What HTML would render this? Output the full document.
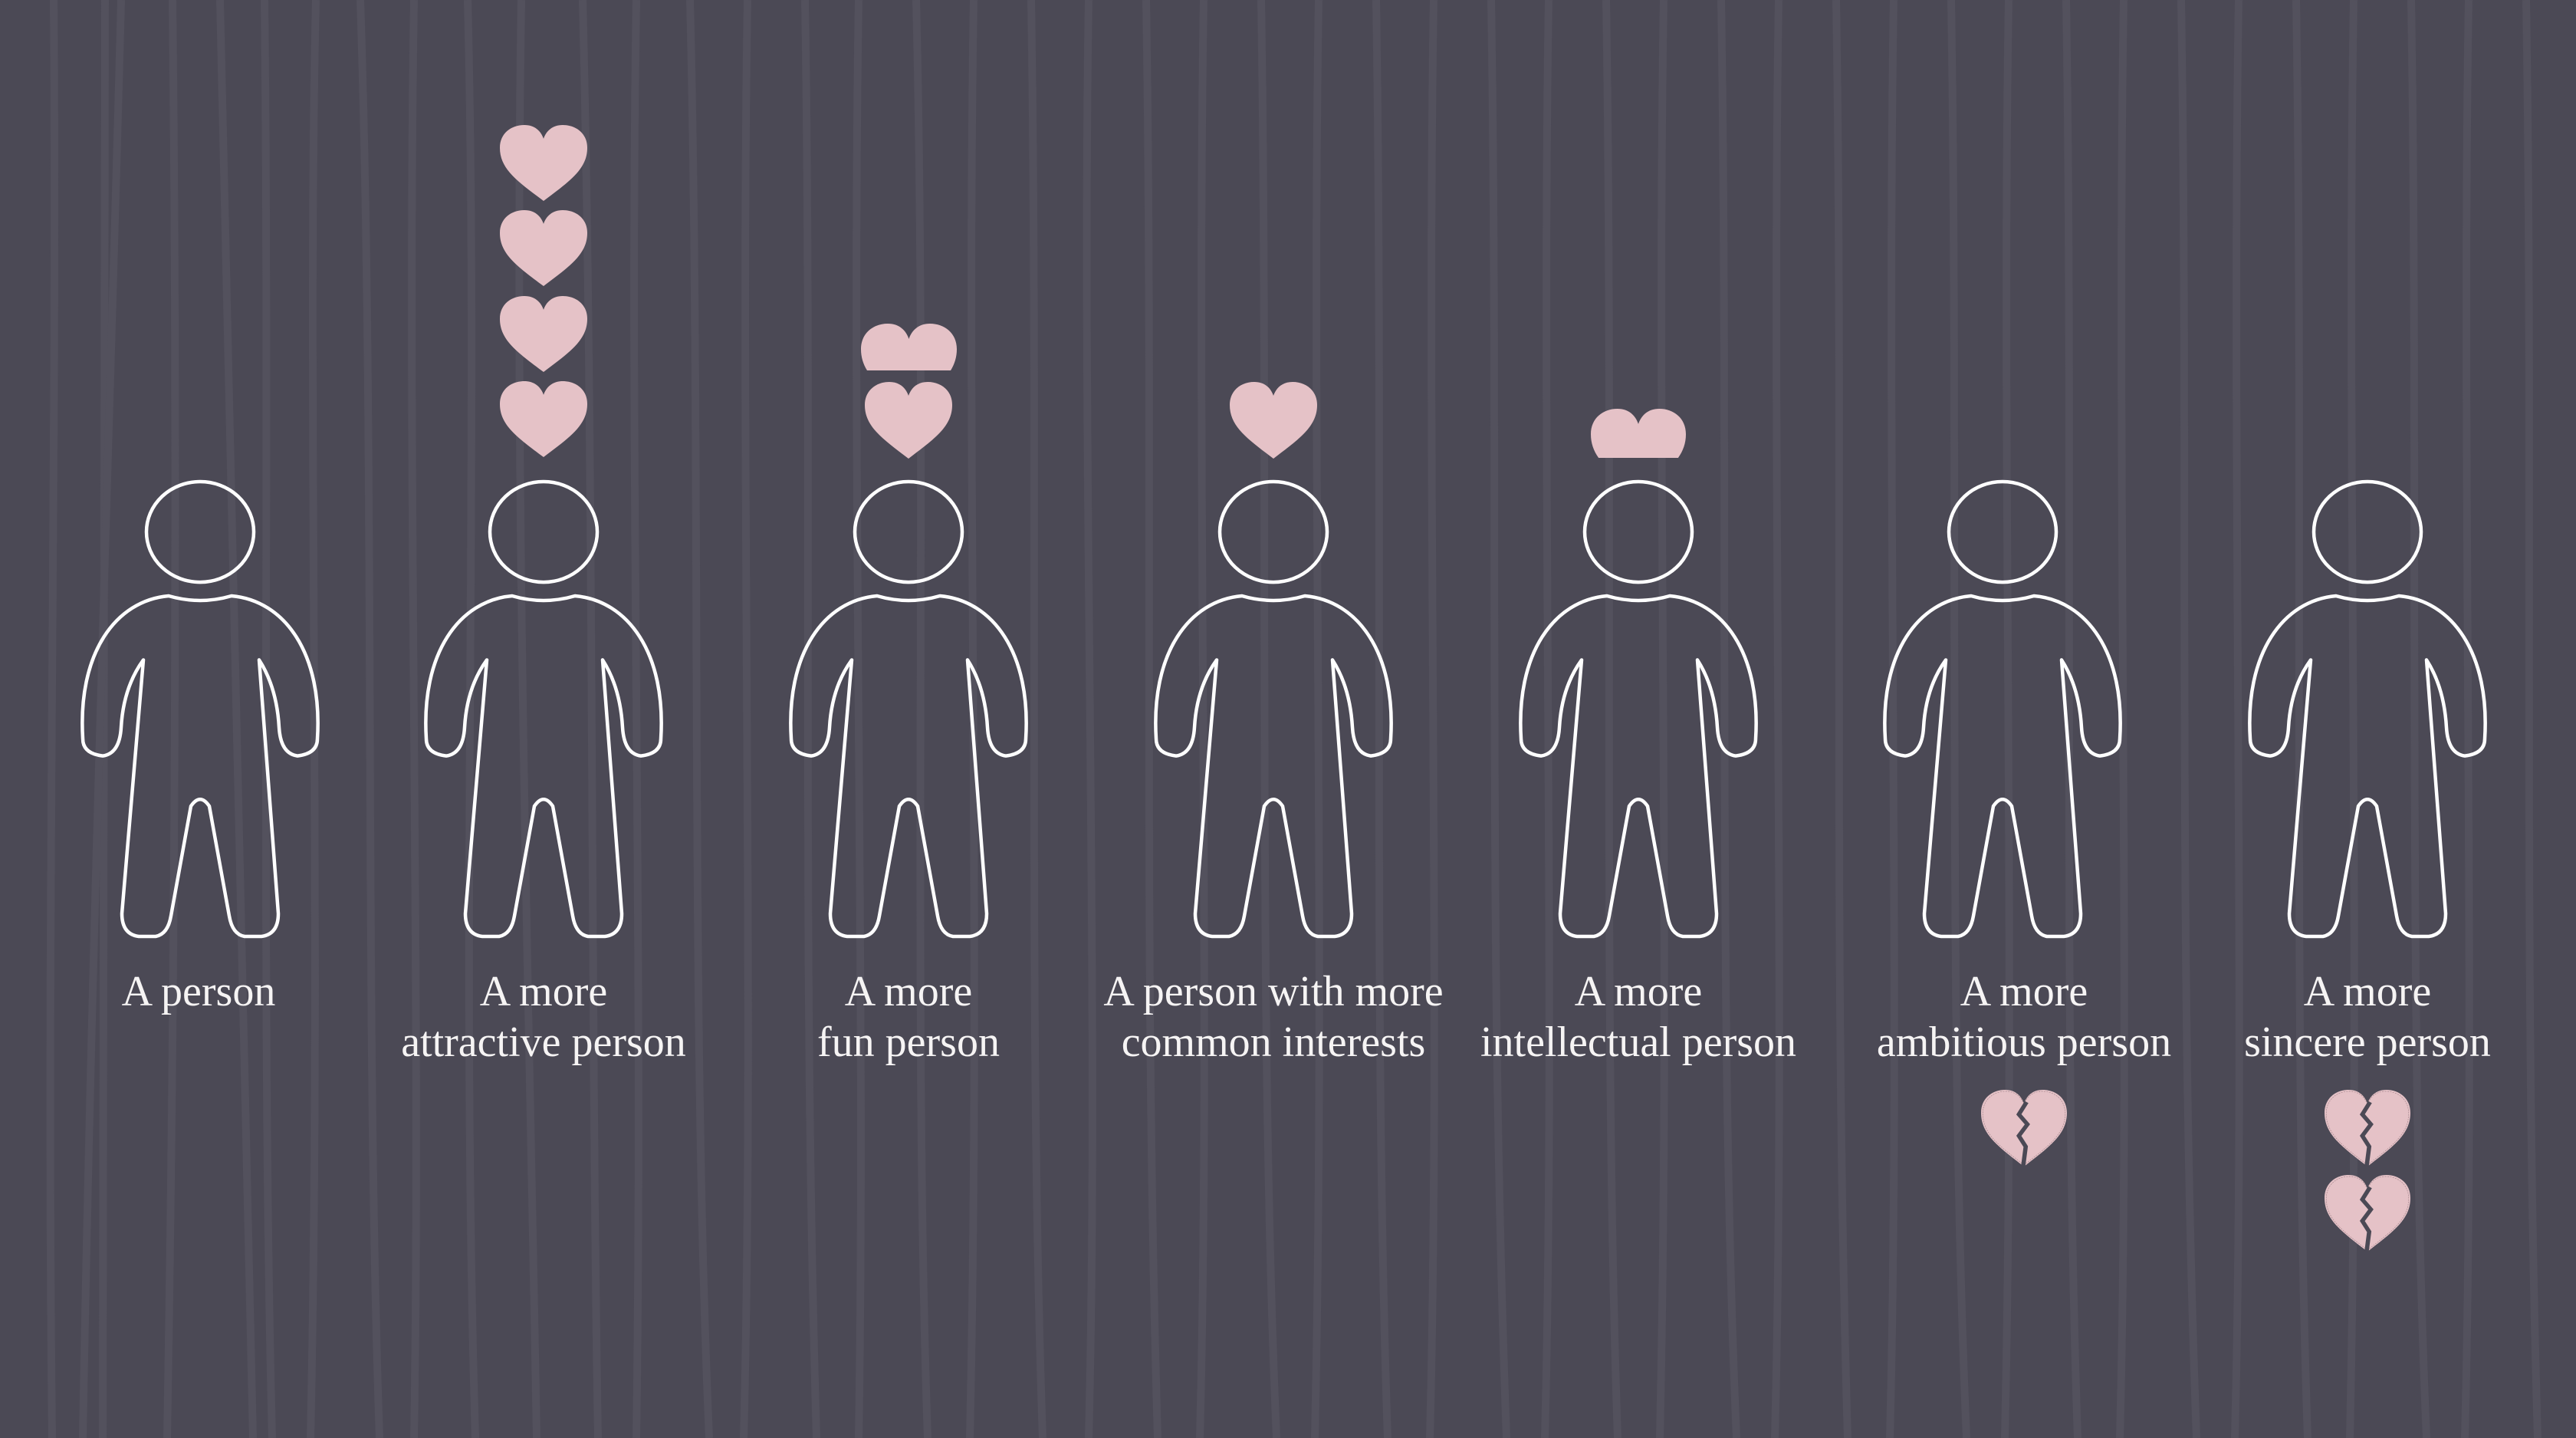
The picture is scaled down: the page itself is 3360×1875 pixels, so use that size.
<!DOCTYPE html>
<html><head><meta charset="utf-8"><style>
html,body{margin:0;padding:0;background:#4b4955;}
body{width:3360px;height:1875px;overflow:hidden;position:relative;}
svg{position:absolute;left:0;top:0;}
.lbl{position:absolute;top:1260px;width:600px;text-align:center;font-family:"Liberation Serif",serif;font-size:56px;line-height:66px;color:#f6f4f4;}
</style></head><body>
<svg width="3360" height="1875" viewBox="0 0 3360 1875">
<defs>
<path id="hp" d="M50 100 C20 74 0 58 0 30 C0 11 13 0 28 0 C40 0 47 8 50 18 C53 8 60 0 72 0 C87 0 100 11 100 30 C100 58 80 74 50 100 Z"/>
<g id="person" fill="none" stroke="#fff" stroke-width="4.5" stroke-linejoin="round">
<ellipse cx="0" cy="44" rx="70" ry="44" vector-effect="non-scaling-stroke"/>
<path vector-effect="non-scaling-stroke" d="M-41 100 Q0 108 41 100 C110 104 160 150 153 225 Q153 238 127 240 Q105 238 103 215 Q100 180 77 156 L102 378 Q102 396 80 398 L58 398 Q42 396 38 380 L12 284 Q0 272 -12 284 L-38 380 Q-42 396 -58 398 L-80 398 Q-102 396 -102 378 L-74 156 Q-100 180 -103 215 Q-105 238 -127 240 Q-153 238 -153 225 C-160 150 -110 104 -41 100 Z"/>
</g>
<g id="broken">
<use href="#hp" fill="#e5c2c7"/>
<use href="#hp" fill="none" stroke="#a88a90" stroke-width="0.7" stroke-dasharray="2 1.2" transform="translate(2 2) scale(0.96)"/>
<path d="M53 16 L44 32 L54 45 L44 60 L52 74 L49 100" fill="none" stroke="#4b4955" stroke-width="5" stroke-linejoin="miter"/>
</g>
</defs>
<g fill="none" stroke="#53515d" stroke-width="10">
<path d="M70 0 C75 600 60 1200 68 1875"/>
<path d="M137 0 C140 600 130 1200 134 1875"/>
<path d="M158 0 C145 500 120 1200 108 1875"/>
<path d="M225 0 C232 600 228 1300 218 1875"/>
<path d="M287 0 C300 600 320 1200 330 1875"/>
<path d="M345 0 C352 600 340 1300 355 1875"/>
<path d="M412 0 C400 500 420 1200 405 1875"/>
<path d="M470 0 C490 600 475 1300 495 1875"/>
<path d="M540 0 C530 600 550 1300 540 1875"/>
<path d="M610 0 C625 600 600 1200 620 1875"/>
<path d="M680 0 C670 600 690 1300 700 1875"/>
<path d="M760 0 C775 600 770 1300 780 1875"/>
<path d="M830 0 C820 600 840 1200 830 1875"/>
<path d="M900 0 C915 600 900 1300 925 1875"/>
<path d="M975 0 C965 600 985 1300 970 1875"/>
<path d="M1050 0 C1060 600 1045 1200 1065 1875"/>
<path d="M1120 0 C1110 600 1130 1300 1120 1875"/>
<path d="M1195 0 C1210 600 1190 1300 1210 1875"/>
<path d="M1270 0 C1260 600 1280 1200 1265 1875"/>
<path d="M1345 0 C1355 600 1340 1300 1360 1875"/>
<path d="M1420 0 C1410 600 1435 1300 1420 1875"/>
<path d="M1495 0 C1505 600 1490 1200 1510 1875"/>
<path d="M1570 0 C1560 600 1580 1300 1565 1875"/>
<path d="M1645 0 C1655 600 1640 1300 1665 1875"/>
<path d="M1720 0 C1710 600 1730 1200 1715 1875"/>
<path d="M1795 0 C1805 600 1790 1300 1810 1875"/>
<path d="M1870 0 C1860 600 1880 1300 1865 1875"/>
<path d="M1945 0 C1955 600 1940 1200 1965 1875"/>
<path d="M2020 0 C2010 600 2030 1300 2015 1875"/>
<path d="M2095 0 C2105 600 2090 1300 2110 1875"/>
<path d="M2170 0 C2160 600 2180 1200 2165 1875"/>
<path d="M2245 0 C2255 600 2240 1300 2265 1875"/>
<path d="M2320 0 C2310 600 2330 1300 2315 1875"/>
<path d="M2395 0 C2405 600 2390 1200 2410 1875"/>
<path d="M2470 0 C2460 600 2480 1300 2465 1875"/>
<path d="M2545 0 C2555 600 2540 1300 2565 1875"/>
<path d="M2620 0 C2610 600 2630 1200 2615 1875"/>
<path d="M2695 0 C2705 600 2690 1300 2710 1875"/>
<path d="M2770 0 C2760 600 2780 1300 2765 1875"/>
<path d="M2845 0 C2855 600 2840 1200 2865 1875"/>
<path d="M2920 0 C2910 600 2930 1300 2915 1875"/>
<path d="M2995 0 C3005 600 2990 1300 3010 1875"/>
<path d="M3070 0 C3060 600 3080 1200 3065 1875"/>
<path d="M3145 0 C3155 600 3140 1300 3165 1875"/>
<path d="M3220 0 C3210 600 3230 1300 3215 1875"/>
<path d="M3295 0 C3305 600 3290 1200 3310 1875"/>
</g>

<use href="#person" transform="translate(261 628) scale(1 1.49)"/>
<use href="#person" transform="translate(709 628) scale(1 1.49)"/>
<use href="#person" transform="translate(1185 628) scale(1 1.49)"/>
<use href="#person" transform="translate(1661 628) scale(1 1.49)"/>
<use href="#person" transform="translate(2137 628) scale(1 1.49)"/>
<use href="#person" transform="translate(2612 628) scale(1 1.49)"/>
<use href="#person" transform="translate(3088 628) scale(1 1.49)"/>

<g fill="#e5c2c7">
<use href="#hp" transform="translate(652 163) scale(1.14 0.99)"/>
<use href="#hp" transform="translate(652 274) scale(1.14 0.99)"/>
<use href="#hp" transform="translate(652 386) scale(1.14 0.99)"/>
<use href="#hp" transform="translate(652 497) scale(1.14 0.99)"/>
<use href="#hp" transform="translate(1128 498) scale(1.14 1.0)"/>
<use href="#hp" transform="translate(1604 498) scale(1.14 1.0)"/>
<svg x="1123" y="422" width="125" height="61" viewBox="0 0 100 55" preserveAspectRatio="none"><use href="#hp"/></svg>
<svg x="2075" y="533" width="124" height="64" viewBox="0 0 100 58" preserveAspectRatio="none"><use href="#hp"/></svg>
</g>
<use href="#broken" transform="translate(2584 1421) scale(1.12 1.0)"/>
<use href="#broken" transform="translate(3032 1421) scale(1.12 1.0)"/>
<use href="#broken" transform="translate(3032 1532) scale(1.12 1.0)"/>
</svg>

<div class="lbl" style="left:-41px">A person</div>
<div class="lbl" style="left:409px">A more<br>attractive person</div>
<div class="lbl" style="left:885px">A more<br>fun person</div>
<div class="lbl" style="left:1361px">A person with more<br>common interests</div>
<div class="lbl" style="left:1837px">A more<br>intellectual person</div>
<div class="lbl" style="left:2340px">A more<br>ambitious person</div>
<div class="lbl" style="left:2788px">A more<br>sincere person</div>
</body></html>
